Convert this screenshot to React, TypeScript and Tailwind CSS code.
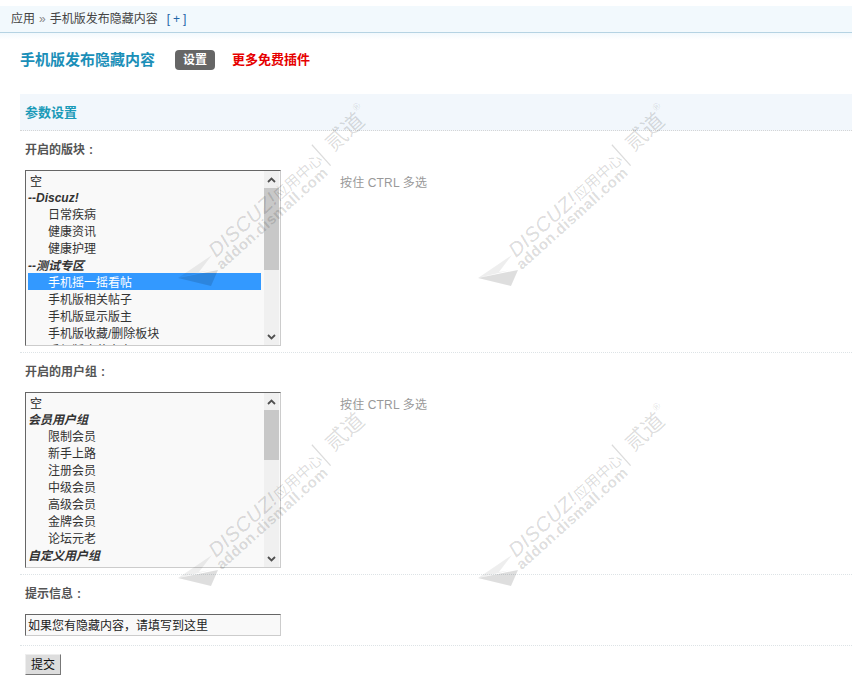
const FONT = "font-['Liberation_Sans','Noto_Sans_CJK_SC',sans-serif]";

function Chevron({ up }: { up?: boolean }) {
  return (
    <svg width="9" height="6" viewBox="0 0 9 6" fill="none" stroke="#505050" strokeWidth="1.8">
      <path d={up ? "M1 5 L4.5 1.5 L8 5" : "M1 1 L4.5 4.5 L8 1"} />
    </svg>
  );
}

type Row = { t: string; kind?: "group" | "opt" | "plain" | "sel" };

function ListBox({ rows, thumbH }: { rows: Row[]; thumbH: number }) {
  return (
    <div className="flex h-[176px] w-[256px] border border-t-[#666] border-l-[#666] border-r-[#ccc] border-b-[#ccc] bg-[#f9f9f9] overflow-hidden">
      <div className="w-[235px] pl-[2px] h-[174px] overflow-hidden shrink-0">
        {rows.map((r, i) => (
          <div
            key={i}
            className={
              "h-[17px] text-[12px] whitespace-nowrap " +
              (r.kind === "group"
                ? "leading-[20px] font-bold italic text-[#333] "
                : r.kind === "sel"
                ? "leading-[20px] pl-[20px] bg-[#3399ff] text-white "
                : r.kind === "plain"
                ? "leading-[23px] pl-[2px] text-[#222] "
                : "leading-[20px] pl-[20px] text-[#333] ")
            }
          >
            {r.t}
          </div>
        ))}
      </div>
      <div className="ml-[3px] w-[15px] h-[174px] bg-[#f0f0f0] flex flex-col">
        <div className="h-[17px] flex items-center justify-center shrink-0"><Chevron up /></div>
        <div className="bg-[#c8c8c8] shrink-0" style={{ height: thumbH }} />
        <div className="flex-1" />
        <div className="h-[17px] flex items-center justify-center shrink-0"><Chevron /></div>
      </div>
    </div>
  );
}

function Divider() {
  return <div className="ml-[20px] border-t border-dotted border-[#dde3e6]" />;
}

function Label({ text }: { text: string }) {
  return (
    <div className="pl-[25px] text-[12px] leading-[20px] font-bold text-[#555]">
      {text}
      <span className="pl-[4px]">:</span>
    </div>
  );
}

function Tip() {
  return <div className="ml-[59px] mt-[4px] text-[12px] leading-[18px] tracking-[0.15px] text-[#999]">按住 CTRL 多选</div>;
}

function Mark() {
  const ink = "#000";
  return (
    <svg className="pointer-events-none overflow-visible" width="200" height="200" viewBox="0 0 200 200">
      <path d="M0 173 L34 150 L21 167 L33 165 Z" fill={ink} fillOpacity="0.065" />
      <path d="M0 173 L40 165 L33 181 Z" fill={ink} fillOpacity="0.13" />
      <g transform="translate(38 153) rotate(-42)" fill={ink} fillOpacity="0.14" fontFamily="'Liberation Sans','Noto Sans CJK SC',sans-serif">
        <text x="0" y="0" fontSize="20" fontStyle="italic" textLength="84" stroke={ink} strokeOpacity="0.08" strokeWidth="0.4">DISCUZ!</text>
        <text x="85" y="0" fontSize="15">应用中心</text>
        <path d="M147 -20 V8" stroke={ink} strokeOpacity="0.14" strokeWidth="1.2" />
        <text x="158" y="0" fontSize="22">贰道</text>
        <text x="202" y="-15" fontSize="10">®</text>
        <text x="-4" y="13" fontSize="15" fontWeight="bold" textLength="144">addon.dismall.com</text>
      </g>
    </svg>
  );
}

const forums: Row[] = [
  { t: "空", kind: "plain" },
  { t: "--Discuz!", kind: "group" },
  { t: "日常疾病" },
  { t: "健康资讯" },
  { t: "健康护理" },
  { t: "--测试专区", kind: "group" },
  { t: "手机摇一摇看帖", kind: "sel" },
  { t: "手机版相关帖子" },
  { t: "手机版显示版主" },
  { t: "手机版收藏/删除板块" },
  { t: "手机版隐藏内容" },
];

const groups: Row[] = [
  { t: "空", kind: "plain" },
  { t: "会员用户组", kind: "group" },
  { t: "限制会员" },
  { t: "新手上路" },
  { t: "注册会员" },
  { t: "中级会员" },
  { t: "高级会员" },
  { t: "金牌会员" },
  { t: "论坛元老" },
  { t: "自定义用户组", kind: "group" },
];

const marks = [
  "left-[178px] top-[105px]",
  "left-[478px] top-[105px]",
  "left-[178px] top-[405px]",
  "left-[478px] top-[405px]",
];

export default function App() {
  return (
    <div className={"relative w-[852px] h-[700px] bg-white overflow-hidden " + FONT}>
      <div className="pt-[6px]">
        <div className="h-[27px] bg-[#f2f9fd] border-b border-[#b5d3e3] pl-[11px] text-[12px] leading-[26px] text-[#444] flex">
          <span>应用</span>
          <span className="mx-[4px] text-[#888]">»</span>
          <span>手机版发布隐藏内容</span>
          <span className="ml-[9px] tracking-[3px] text-[#2366a8]">[+]</span>
        </div>
        <div className="h-[7px] bg-gradient-to-b from-[#f2f9fd] to-white" />
      </div>

      <div className="mt-[10px] ml-[20px] h-[20px] flex items-center">
        <span className="text-[15px] leading-[22px] font-bold text-[#1b8fb8] w-[155px]">手机版发布隐藏内容</span>
        <span className="bg-[#666] text-white font-bold text-[12px] w-[40px] h-[20px] leading-[20px] text-center rounded-[4px]">设置</span>
        <span className="ml-[17px] text-[#e60000] font-bold text-[13px] leading-[22px]">更多免费插件</span>
      </div>

      <div className="mt-[24px] ml-[20px] h-[37px] bg-[#f2f7fc] border-b border-dotted border-[#d5d5d5] pl-[5px] text-[13px] font-bold leading-[38px] text-[#1a9ab8]">参数设置</div>

      <div className="pt-[9px]"><Label text="开启的版块" /></div>
      <div className="mt-[10px] ml-[25px] flex">
        <ListBox rows={forums} thumbH={82} />
        <Tip />
      </div>
      <div className="mt-[6px]"><Divider /></div>

      <div className="pt-[9px]"><Label text="开启的用户组" /></div>
      <div className="mt-[10px] ml-[25px] flex">
        <ListBox rows={groups} thumbH={50} />
        <Tip />
      </div>
      <div className="mt-[6px]"><Divider /></div>

      <div className="pt-[9px]"><Label text="提示信息" /></div>
      <div className="mt-[10px] ml-[25px] w-[256px] h-[22px] border border-t-[#666] border-l-[#666] border-r-[#ccc] border-b-[#ccc] bg-[#f9f9f9] pl-[2px] text-[12px] leading-[22px] text-[#222]">如果您有隐藏内容，请填写到这里</div>
      <div className="mt-[9px]"><Divider /></div>
      <div className="mt-[8px] ml-[25px] w-[36px] h-[21px] bg-[#ddd] border border-t-[#eee] border-l-[#eee] border-r-[#777] border-b-[#777] text-[12px] leading-[21px] text-center text-[#111]">提交</div>

      {marks.map((m) => (
        <div key={m} className={"absolute " + m}><Mark /></div>
      ))}
    </div>
  );
}
